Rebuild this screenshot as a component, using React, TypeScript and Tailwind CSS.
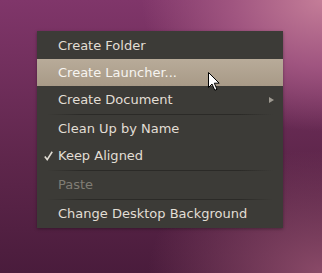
import React from "react";

function Sep() {
  return (
    <div className="h-[2px] flex items-center px-[10px]">
      <div className="h-px w-full bg-[linear-gradient(to_right,transparent,#2b2a27_15%,#2b2a27_85%,transparent)]" />
    </div>
  );
}

function Item({
  label,
  highlight,
  disabled,
  check,
  submenu,
}: {
  label: string;
  highlight?: boolean;
  disabled?: boolean;
  check?: boolean;
  submenu?: boolean;
}) {
  return (
    <div
      className={
        "relative h-[27px] flex items-center pl-[21px] pr-[9px] " +
        (highlight
          ? "bg-[linear-gradient(to_bottom,#b8ab99,#a89a87)] text-[#f6f4f0]"
          : disabled
          ? "text-[#807d75]"
          : "text-[#e2ded5]")
      }
    >
      {check && (
        <svg
          className="absolute left-[7px] top-[9px]"
          width="9"
          height="10"
          viewBox="0 0 9 10"
        >
          <path d="M0.8 5.6 L3.2 8.6 L8.2 0.8" fill="none" stroke="#dfdbd2" strokeWidth="1.6" />
        </svg>
      )}
      <span className="flex-1 whitespace-nowrap">{label}</span>
      {submenu && (
        <svg width="5" height="6" viewBox="0 0 5 6">
          <path d="M0 0 L5 3 L0 6 Z" fill="#9e9a91" />
        </svg>
      )}
    </div>
  );
}

export default function App() {
  return (
    <div
      className="relative w-[322px] h-[273px] overflow-hidden bg-[image:radial-gradient(ellipse_70%_60%_at_100%_0%,#c47d98_0%,#a05580_40%,transparent_80%),radial-gradient(ellipse_60%_50%_at_100%_100%,#8a4a68_0%,transparent_90%),linear-gradient(to_bottom,#80366a,#5e264b_60%,#4a1c3c)] pt-[31px] pl-[37px]"
      style={{ fontFamily: '"DejaVu Sans", sans-serif' }}
    >
      <div className="w-[246px] bg-[#3c3b37] py-px text-[13px] leading-none shadow-[0_1px_3px_rgba(0,0,0,0.35)]">
        <Item label="Create Folder" />
        <Item label="Create Launcher..." highlight />
        <Item label="Create Document" submenu />
        <Sep />
        <Item label="Clean Up by Name" />
        <Item label="Keep Aligned" check />
        <Sep />
        <Item label="Paste" disabled />
        <Sep />
        <Item label="Change Desktop Background" />
      </div>
      <svg
        className="absolute left-[208px] top-[72px]"
        width="13"
        height="20"
        viewBox="0 0 13 20"
      >
        <path
          d="M0.5 0.5 L0.5 15.5 L4 12 L6.8 18.3 L9 17.3 L6.3 11.2 L11.2 11.2 Z"
          fill="#ffffff"
          stroke="#000000"
          strokeWidth="1"
          strokeLinejoin="round"
        />
      </svg>
    </div>
  );
}
